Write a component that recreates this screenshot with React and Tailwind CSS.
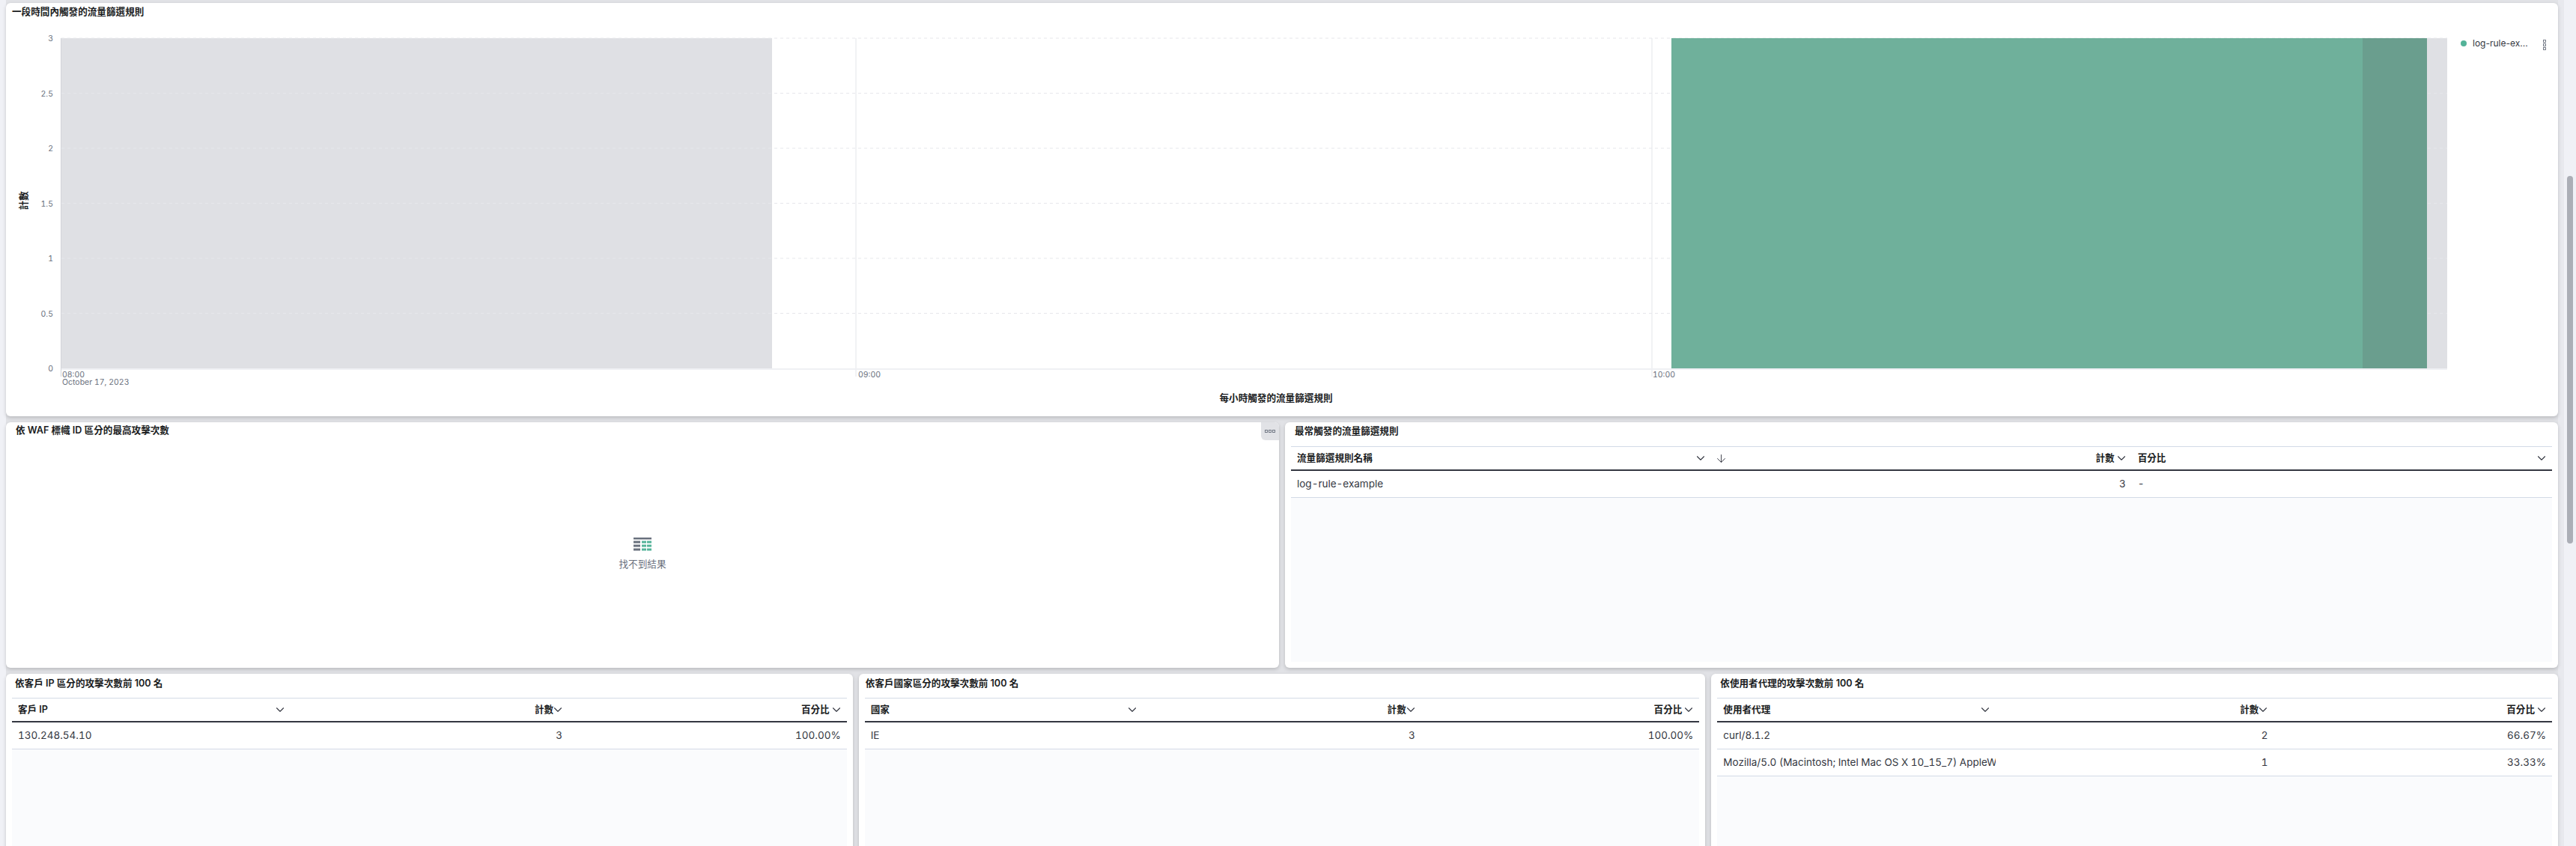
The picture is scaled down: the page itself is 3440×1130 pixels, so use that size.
import React from 'react';
import { ChevronDown, ArrowDown } from 'lucide-react';

const font = 'font-["Inter","Noto_Sans_CJK_TC",sans-serif]';

const HeaderCell = ({ label, align, sort, tight }) => (
    <div className={`flex items-center px-2 min-w-0 relative ${align === 'end' ? 'justify-end' : 'justify-between'}`}>
        {sort && <ArrowDown size={17} strokeWidth={1.3} className="absolute left-[5px] text-[#343741]" />}
        <span className="font-semibold text-[12.6px] text-[#1a1c21] whitespace-nowrap">{label}</span>
        <ChevronDown size={18} strokeWidth={1.5} className={`text-[#343741] shrink-0 -mr-[3px] ${tight ? '-ml-[3px]' : ''}`} />
    </div>
);

const DataTable = ({ columns, rows, sort }) => (
    <div className="flex flex-col flex-1 min-h-0 bg-[#fafbfd]">
        <div className="grid grid-cols-3 h-[33px] bg-white border-t border-[#d3dae6] border-b-2 border-b-[#343741] shrink-0">
            <HeaderCell label={columns[0]} />
            <HeaderCell label={columns[1]} align="end" sort={sort} tight={!sort} />
            <HeaderCell label={columns[2]} align={sort ? 'between' : 'end'} />
        </div>
        {rows.map((row) => (
            <div key={row[0]} className="grid grid-cols-3 h-[36px] bg-white border-b border-[#d3dae6] text-[13.5px] text-[#343741] tabular-nums shrink-0">
                <div className="px-2 flex items-center whitespace-nowrap overflow-hidden">{row[0]}</div>
                <div className="px-2 flex items-center justify-end">{row[1]}</div>
                <div className={`px-2 flex items-center ${row[2] === '-' ? 'justify-start' : 'justify-end'}`}>{row[2]}</div>
            </div>
        ))}
    </div>
);

const TablePanel = ({ title, columns, rows, sort, titleClass }) => (
    <div className="flex flex-col bg-white rounded-md shadow-[0_2px_5px_rgba(0,0,0,0.18)] px-2 pb-2 overflow-hidden">
        <div className={`h-[32px] shrink-0 font-semibold text-[12.6px] text-[#1a1c21] leading-[20px] ${titleClass}`}>{title}</div>
        <DataTable columns={columns} rows={rows} sort={sort} />
    </div>
);

const EmptyIcon = () => (
    <svg width="24" height="19" viewBox="0 0 24 19">
        <rect x="0" y="0" width="24" height="2.5" fill="#69707d" />
        <rect x="0" y="4.5" width="9" height="3" fill="#69707d" />
        <rect x="0" y="9.5" width="9" height="3" fill="#69707d" />
        <rect x="0" y="14.5" width="9" height="3" fill="#69707d" />
        <rect x="11" y="4.5" width="6" height="3" fill="#54b399" />
        <rect x="18" y="4.5" width="6" height="3" fill="#54b399" />
        <rect x="11" y="9.5" width="6" height="3" fill="#54b399" />
        <rect x="18" y="9.5" width="6" height="3" fill="#54b399" />
        <rect x="11" y="14.5" width="6" height="3" fill="#54b399" />
        <rect x="18" y="14.5" width="6" height="3" fill="#54b399" />
    </svg>
);

const DotsIcon = ({ vertical }) => (
    <svg width={vertical ? 4 : 14} height={vertical ? 14 : 4} viewBox={vertical ? '0 0 4 14' : '0 0 14 4'} fill="none" stroke="#69707d" strokeWidth="0.9">
        {[0, 5, 10].map((p) => (
            <rect key={p} x={vertical ? 0.5 : p + 0.5} y={vertical ? p + 0.5 : 0.5} width="3" height="3" />
        ))}
    </svg>
);

// plot coordinates are page pixels, see viewBox
const yTicks = [
    { label: '3', y: 51 },
    { label: '2.5', y: 124.5 },
    { label: '2', y: 198 },
    { label: '1.5', y: 271.5 },
    { label: '1', y: 345 },
    { label: '0.5', y: 418.5 },
    { label: '0', y: 492 },
];

const Chart = () => (
    <svg width="3408" height="526" viewBox="8 30 3408 526" className="block tabular-nums">
        <rect x="82" y="51" width="949" height="441" fill="#dfe0e4" />
        <rect x="3241" y="51" width="27" height="441" fill="#dfe0e4" />
        <line x1="1143" y1="51" x2="1143" y2="503" stroke="#e3e5ea" />
        <line x1="2206" y1="51" x2="2206" y2="503" stroke="#e3e5ea" />
        {yTicks.slice(0, -1).map((t) => (
            <line key={t.label} x1="82" y1={t.y} x2="3268" y2={t.y} stroke="#e6e7eb" strokeDasharray="4 4" />
        ))}
        <rect x="2232" y="51" width="923" height="441" fill="#6fb09b" />
        <rect x="3155" y="51" width="86" height="441" fill="#6a9e8e" />
        <line x1="81.5" y1="51" x2="81.5" y2="503" stroke="#d3d5da" />
        <line x1="82" y1="493" x2="3268" y2="493" stroke="#eff0f4" strokeWidth="2" />
        {yTicks.map((t) => (
            <text key={t.label} x="71" y={t.y + 4} textAnchor="end" fontSize="10.5" fill="#69707d">{t.label}</text>
        ))}
        <text x="83" y="504" fontSize="10.5" fill="#69707d">08:00</text>
        <text x="83" y="514" fontSize="10.5" fill="#69707d">October 17, 2023</text>
        <text x="1146" y="504" fontSize="10.5" fill="#69707d">09:00</text>
        <text x="2207" y="504" fontSize="10.5" fill="#69707d">10:00</text>
        <text x="1704" y="536" textAnchor="middle" fontSize="12.6" fontWeight="600" fill="#1a1c21">每小時觸發的流量篩選規則</text>
        <text x="0" y="0" transform="translate(36 268) rotate(-90)" textAnchor="middle" fontSize="12.6" fontWeight="600" fill="#1a1c21">計數</text>
    </svg>
);

export default function App() {
    return (
        <div className={`${font} flex w-[3440px] h-[1130px] overflow-hidden bg-[#f0f1f6]`}>
            <main className="w-[3424px] shrink-0 flex flex-col gap-2 bg-[#e1e2e6] border-l-8 border-r-8 border-l-[#f0f1f6] border-r-[#e8e9ee] pt-1">
                {/* Traffic chart */}
                <section className="relative h-[552px] shrink-0 bg-white rounded-md shadow-[0_2px_5px_rgba(0,0,0,0.18)]">
                    <div className="h-[26px] pl-2 pt-[2px] font-semibold text-[12.6px] text-[#1a1c21] leading-[20px]">一段時間內觸發的流量篩選規則</div>
                    <Chart />
                    <div className="absolute left-[3278px] top-[44px] flex items-center h-[20px] text-[12px] text-[#343741]">
                        <span className="w-2 h-2 rounded-full bg-[#54b399] mr-2" />
                        log-rule-ex...
                    </div>
                    <div className="absolute left-[3388px] top-[49px]"><DotsIcon vertical /></div>
                </section>

                {/* Middle row */}
                <div className="grid grid-cols-2 gap-2 h-[328px] shrink-0">
                    <section className="relative flex flex-col bg-white rounded-md shadow-[0_2px_5px_rgba(0,0,0,0.18)]">
                        <div className="h-[24px] shrink-0 pl-[13px] pt-[1px] font-semibold text-[12.6px] text-[#1a1c21] leading-[20px]">依 WAF 標幟 ID 區分的最高攻擊次數</div>
                        <div className="flex-1 flex flex-col items-center justify-center gap-[9px]">
                            <EmptyIcon />
                            <span className="text-[12.6px] text-[#69707d] leading-[16px]">找不到結果</span>
                        </div>
                        <div className="absolute right-0 top-0 w-6 h-6 bg-[#e1e2e6] rounded-tr-md rounded-bl-md flex items-center justify-center">
                            <DotsIcon />
                        </div>
                    </section>
                    <TablePanel
                        title="最常觸發的流量篩選規則"
                        columns={['流量篩選規則名稱', '計數', '百分比']}
                        rows={[['log-rule-example', '3', '-']]}
                        sort
                        titleClass="pl-[5px] pt-[2px]"
                    />
                </div>

                {/* Bottom row, runs past the fold */}
                <div className="grid grid-cols-3 gap-2 h-[300px] shrink-0">
                    <TablePanel
                        title="依客戶 IP 區分的攻擊次數前 100 名"
                        columns={['客戶 IP', '計數', '百分比']}
                        rows={[['130.248.54.10', '3', '100.00%']]}
                        titleClass="pl-[4px] pt-[3px]"
                    />
                    <TablePanel
                        title="依客戶國家區分的攻擊次數前 100 名"
                        columns={['國家', '計數', '百分比']}
                        rows={[['IE', '3', '100.00%']]}
                        titleClass="pl-[1px] pt-[3px]"
                    />
                    <TablePanel
                        title="依使用者代理的攻擊次數前 100 名"
                        columns={['使用者代理', '計數', '百分比']}
                        rows={[
                            ['curl/8.1.2', '2', '66.67%'],
                            ['Mozilla/5.0 (Macintosh; Intel Mac OS X 10_15_7) AppleWebKit/537.36', '1', '33.33%'],
                        ]}
                        titleClass="pl-[4px] pt-[3px]"
                    />
                </div>
            </main>

            {/* Scrollbar */}
            <div className="w-4 shrink-0 bg-[#f0f1f6] pt-[235px] flex justify-center">
                <div className="w-2 h-[491px] rounded-full bg-[#abaeb6]" />
            </div>
        </div>
    );
}
